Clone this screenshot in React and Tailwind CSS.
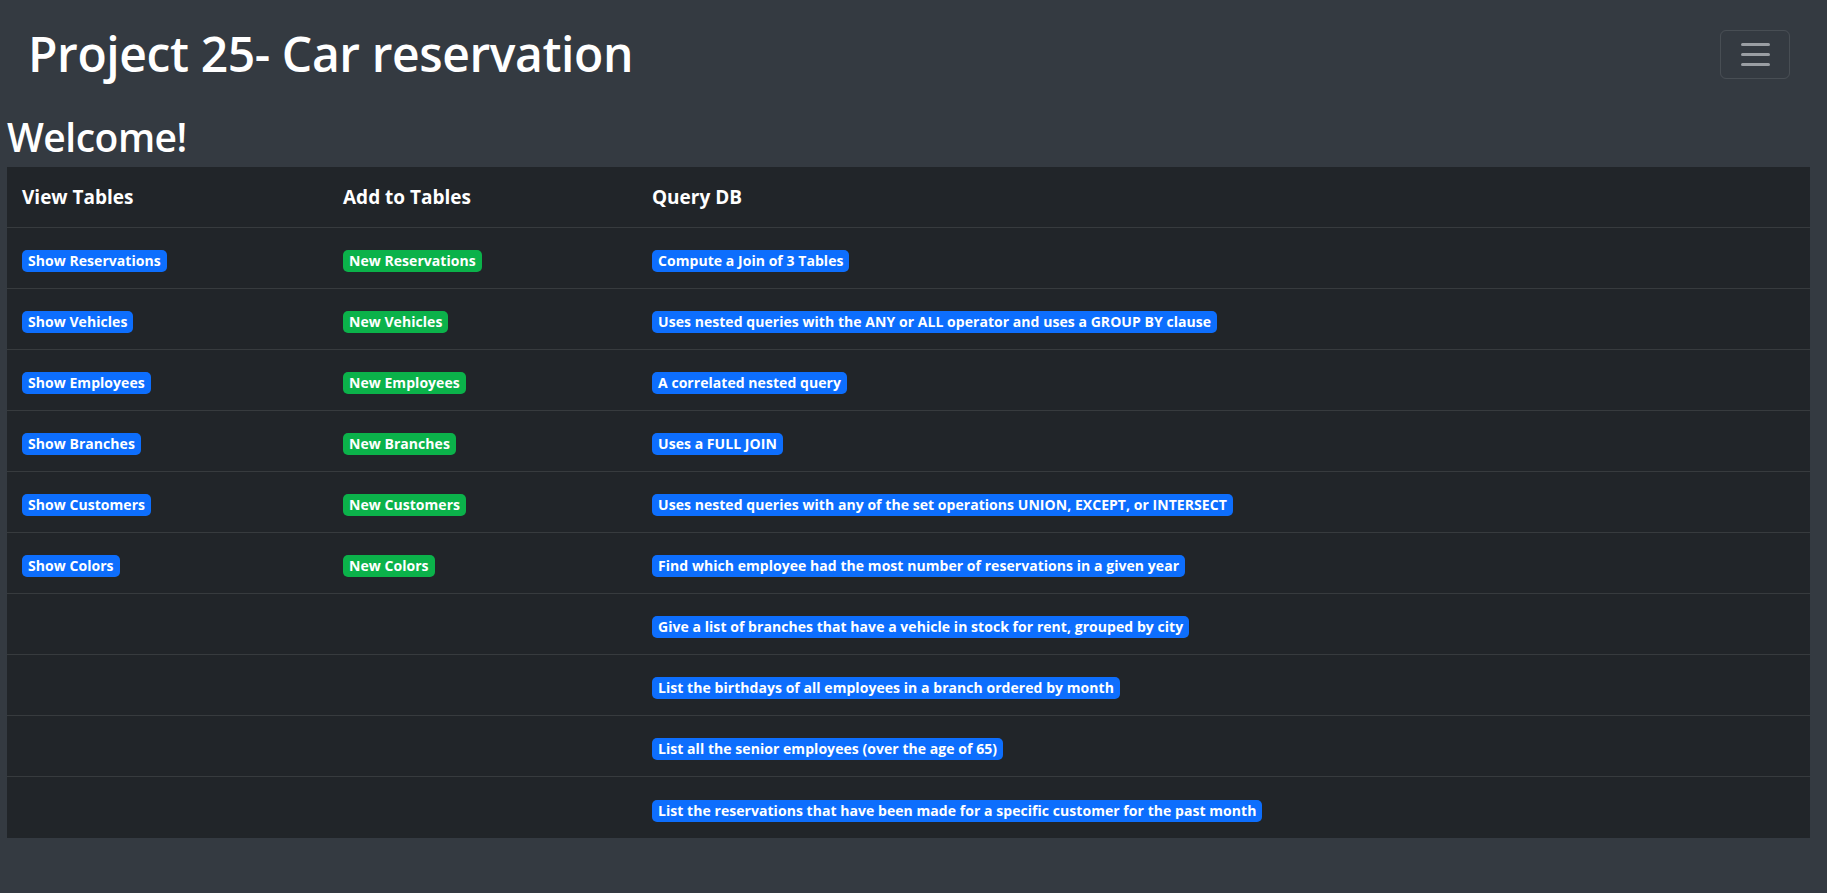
import React from "react";

const rows = [
  ["Show Reservations", "New Reservations", "Compute a Join of 3 Tables"],
  ["Show Vehicles", "New Vehicles", "Uses nested queries with the ANY or ALL operator and uses a GROUP BY clause"],
  ["Show Employees", "New Employees", "A correlated nested query"],
  ["Show Branches", "New Branches", "Uses a FULL JOIN"],
  ["Show Customers", "New Customers", "Uses nested queries with any of the set operations UNION, EXCEPT, or INTERSECT"],
  ["Show Colors", "New Colors", "Find which employee had the most number of reservations in a given year"],
  [null, null, "Give a list of branches that have a vehicle in stock for rent, grouped by city"],
  [null, null, "List the birthdays of all employees in a branch ordered by month"],
  [null, null, "List all the senior employees (over the age of 65)"],
  [null, null, "List the reservations that have been made for a specific customer for the past month"],
];

function Badge({ children, color }) {
  return (
    <span
      className={
        "inline-flex items-center h-[22px] px-[6px] rounded-[5px] text-white font-bold text-[14px] leading-none whitespace-nowrap tracking-[0.05px] " +
        (color === "green" ? "bg-[#0bb24a]" : "bg-[#0d6efd]")
      }
    >
      {children}
    </span>
  );
}

export default function App() {
  return (
    <div
      className="min-h-[893px] w-full bg-[#343a41] text-white"
      style={{ fontFamily: '"Open Sans", "Noto Sans", sans-serif' }}
    >
      <nav className="flex items-center justify-between h-[108px] pl-[28px] pr-[37px]">
        <div className="text-[48px] font-semibold leading-none tracking-[-0.4px]">
          Project 25- Car reservation
        </div>
        <button className="w-[70px] h-[49px] rounded-[6px] border border-white/10 flex flex-col items-center justify-center gap-[7px]">
          <span className="block w-[29px] h-[3px] rounded bg-[#9a9ea3]" />
          <span className="block w-[29px] h-[3px] rounded bg-[#9a9ea3]" />
          <span className="block w-[29px] h-[3px] rounded bg-[#9a9ea3]" />
        </button>
      </nav>
      <h1 className="pl-[7px] text-[39px] font-semibold leading-[61px] tracking-[-0.5px] -mt-[2px]">Welcome!</h1>
      <div className="ml-[7px] w-[1803px] bg-[#212529]">
        <div className="grid grid-cols-[320px_309px_1fr] h-[61px] items-center border-b border-[#373b3e] font-bold text-[19px]">
          <div className="pl-[15px]">View Tables</div>
          <div className="pl-[16px]">Add to Tables</div>
          <div className="pl-[16px]">Query DB</div>
        </div>
        {rows.map((r, i) => (
          <div
            key={i}
            className={
              "grid grid-cols-[320px_309px_1fr] h-[61px] items-center pt-[4px] " +
              (i < rows.length - 1 ? "border-b border-[#373b3e]" : "")
            }
          >
            <div className="pl-[15px]">{r[0] && <Badge>{r[0]}</Badge>}</div>
            <div className="pl-[16px]">{r[1] && <Badge color="green">{r[1]}</Badge>}</div>
            <div className="pl-[16px]">{r[2] && <Badge>{r[2]}</Badge>}</div>
          </div>
        ))}
      </div>
    </div>
  );
}
